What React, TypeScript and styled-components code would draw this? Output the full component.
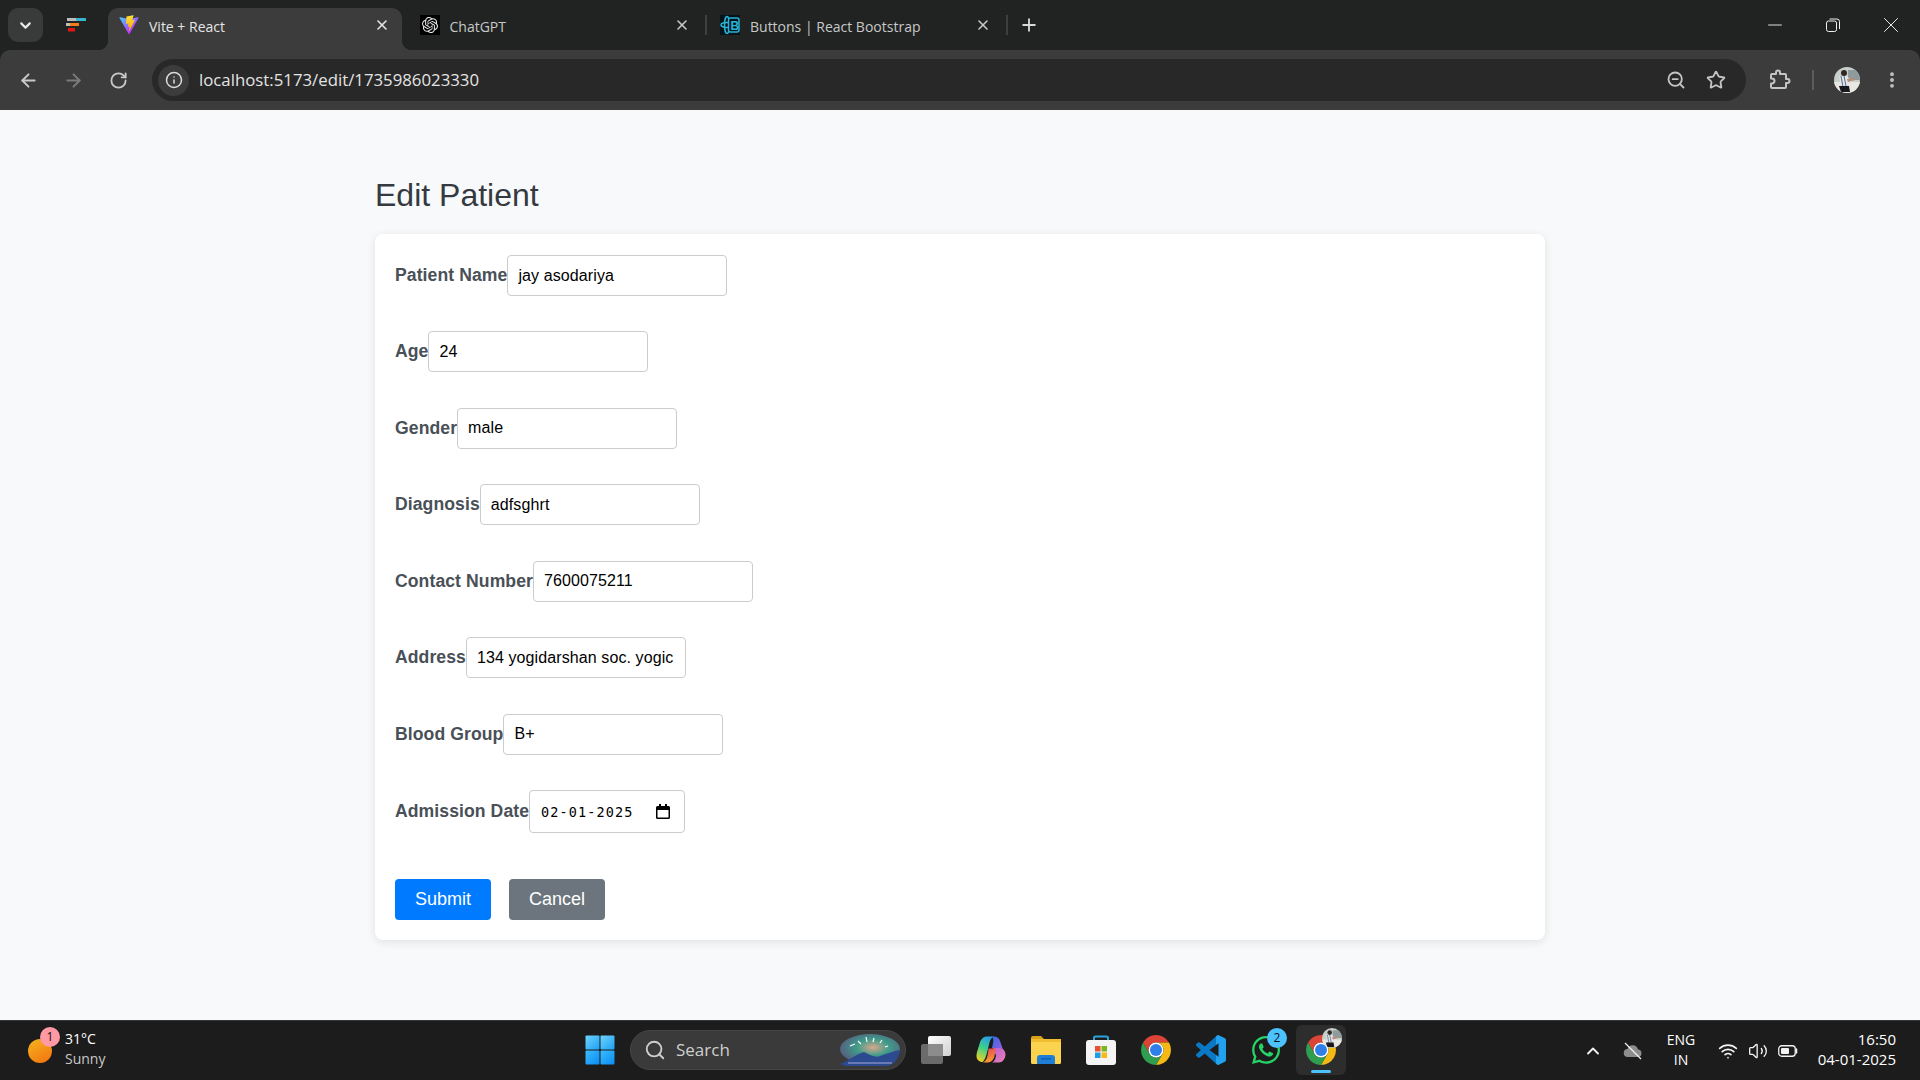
import React from 'react';
import styled, { createGlobalStyle } from 'styled-components';
import {
  ArrowLeft,
  ArrowRight,
  ChevronDown,
  ChevronUp,
  EllipsisVertical,
  Info,
  Minus,
  Plus,
  RotateCw,
  Search,
  Star,
  Volume2,
  Wifi,
  X,
  ZoomOut,
} from 'lucide-react';
import { FaWhatsapp } from 'react-icons/fa';
import { SiOpenai } from 'react-icons/si';

const GlobalStyle = createGlobalStyle`
  html, body {
    margin: 0;
    padding: 0;
    height: 100%;
    overflow: hidden;
  }
  body {
    font-family: "Liberation Sans", Arial, sans-serif;
    background: #202322;
  }
  * {
    box-sizing: border-box;
  }
`;

const uiFont = `"Open Sans", "Noto Sans", sans-serif`;

const Screen = styled.div`
  width: 1920px;
  height: 1080px;
  display: flex;
  flex-direction: column;
  background: #202322;
`;

/* ---------- tab strip ---------- */

const TabStrip = styled.div`
  height: 50px;
  flex: none;
  display: flex;
  padding-left: 8px;
  font-family: ${uiFont};
`;

const TabMenuButton = styled.div`
  width: 35px;
  height: 34px;
  margin-top: 8px;
  border-radius: 10px;
  background: #393b3b;
  color: #e8e8e8;
  display: flex;
  align-items: center;
  justify-content: center;
`;

const TabSearchCell = styled.div`
  width: 65px;
  display: flex;
  align-items: center;
  justify-content: center;
`;

const Tab = styled.div<{ $active?: boolean; $sep?: boolean }>`
  position: relative;
  isolation: isolate;
  width: 300.5px;
  height: 42px;
  margin-top: 8px;
  padding: 0 19px 8px 11px;
  display: flex;
  align-items: center;
  font-size: 14px;
  color: ${(p) => (p.$active ? '#e6e6e6' : '#c8c8c8')};

  &::after {
    content: '';
    display: ${(p) => (p.$sep ? 'block' : 'none')};
    position: absolute;
    right: 2px;
    top: 7px;
    width: 2px;
    height: 20px;
    background: #3d3f3f;
  }
`;

const ActiveTabShape = styled.span`
  position: absolute;
  z-index: -1;
  left: 0;
  top: 0;
  bottom: 0;
  width: 294px;
  background: #3c3c3c;
  border-radius: 10px 10px 0 0;

  &::before,
  &::after {
    content: '';
    position: absolute;
    bottom: 0;
    width: 10px;
    height: 10px;
  }
  &::before {
    left: -10px;
    background: radial-gradient(circle at 0 0, transparent 10px, #3c3c3c 10.5px);
  }
  &::after {
    right: -10px;
    background: radial-gradient(circle at 100% 0, transparent 10px, #3c3c3c 10.5px);
  }
`;

const Favicon = styled.span`
  width: 20px;
  height: 20px;
  flex: none;
  display: flex;
  align-items: center;
  justify-content: center;
`;

const DarkFavicon = styled(Favicon)`
  background: #000;
  color: #e8e8e8;
`;

const TabTitle = styled.span`
  margin: 2px 0 0 10px;
  flex: 1;
  white-space: nowrap;
`;

const NewTabCell = styled.div`
  width: 38px;
  display: flex;
  align-items: center;
  justify-content: center;
  color: #d8d8d8;
`;

const WindowControls = styled.div`
  margin-left: auto;
  display: flex;
`;

const WindowButton = styled.div`
  width: 58px;
  display: flex;
  align-items: center;
  justify-content: center;
  color: #f0f0f0;
`;

/* ---------- toolbar ---------- */

const Toolbar = styled.div`
  height: 60px;
  flex: none;
  display: flex;
  align-items: center;
  padding-left: 6px;
  background: #3c3c3c;
  border-radius: 10px 10px 0 0;
  font-family: ${uiFont};
`;

const NavButton = styled.div<{ $dim?: boolean }>`
  width: 45px;
  height: 40px;
  flex: none;
  display: flex;
  align-items: center;
  justify-content: center;
  color: ${(p) => (p.$dim ? '#7b7b7b' : '#c9c9c9')};
`;

const AddressBar = styled.div`
  width: 1594px;
  height: 42px;
  margin-left: 11px;
  padding: 0 10px 0 6px;
  flex: none;
  display: flex;
  align-items: center;
  background: #282828;
  border-radius: 21px;
`;

const SiteInfo = styled.div`
  width: 31px;
  height: 31px;
  border-radius: 50%;
  background: #3c3c3c;
  color: #dcdcdc;
  display: flex;
  align-items: center;
  justify-content: center;
`;

const UrlText = styled.span`
  margin: 0 auto 2px 10px;
  font-size: 16.8px;
  color: #e4e4e4;
`;

const BarIcon = styled.div`
  width: 40px;
  height: 40px;
  flex: none;
  display: flex;
  align-items: center;
  justify-content: center;
  color: #c4c4c4;
`;

const ExtensionCell = styled(BarIcon)`
  margin-left: 13px;
`;

const ToolbarDivider = styled.div`
  width: 2px;
  height: 20px;
  margin: 0 20px 0 13px;
  background: #5c5c5c;
`;

const Avatar = styled.div`
  width: 26px;
  height: 26px;
  flex: none;
  border-radius: 50%;
  overflow: hidden;
`;

const MenuCell = styled(BarIcon)`
  margin-left: 12px;
`;

/* ---------- page ---------- */

const Page = styled.main`
  flex: 1;
  background: #f8f9fa;
  padding-top: 65px;
`;

const Container = styled.div`
  width: 1170px;
  margin: 0 auto;
`;

const Heading = styled.h2`
  margin: 0 0 20px;
  height: 39px;
  font-size: 32px;
  line-height: 40px;
  font-weight: 400;
  color: #343a40;
`;

const Card = styled.form`
  background: #fff;
  border-radius: 8px;
  padding: 21px 20px 20px;
  box-shadow: 0 2px 10px rgba(0, 0, 0, 0.1);
  display: flex;
  flex-direction: column;
`;

const FormRow = styled.div`
  display: flex;
  align-items: center;
  margin-bottom: 35.45px;
`;

const FieldLabel = styled.label`
  font-size: 17.6px;
  font-weight: 700;
  letter-spacing: 0.08px;
  color: #495057;
  white-space: nowrap;
`;

const TextInput = styled.input`
  width: 220px;
  height: 41px;
  padding: 10px;
  border: 1px solid #ccc;
  border-radius: 4px;
  background: #fff;
  font-family: "Liberation Sans", Arial, sans-serif;
  font-size: 16px;
  letter-spacing: 0.1px;
  color: #000;
  outline: none;
`;

const DateField = styled.div`
  width: 156px;
  height: 43px;
  padding: 0 14px 0 11px;
  border: 1px solid #ccc;
  border-radius: 4px;
  display: flex;
  align-items: center;
  justify-content: space-between;
  font-family: "DejaVu Sans Mono", "Liberation Mono", monospace;
  font-size: 13.5px;
  letter-spacing: 1.1px;
  color: #000;
`;

const ButtonRow = styled.div`
  display: flex;
  gap: 18px;
  margin-top: 10.4px;
`;

const ActionButton = styled.button<{ $tone: string }>`
  height: 41px;
  padding: 0 20px;
  border: none;
  border-radius: 4px;
  background: ${(p) => p.$tone};
  color: #fff;
  font-family: "Liberation Sans", Arial, sans-serif;
  font-size: 18px;
`;

/* ---------- taskbar ---------- */

const Taskbar = styled.footer`
  height: 60px;
  flex: none;
  display: flex;
  align-items: center;
  padding-right: 24px;
  background: #1c1c1c;
  border-top: 1px solid #363636;
  font-family: ${uiFont};
  color: #fff;
`;

const Weather = styled.div`
  width: 575px;
  padding-left: 28px;
  display: flex;
  align-items: center;
`;

const WeatherIcon = styled.div`
  position: relative;
  width: 24px;
  height: 24px;
  border-radius: 50%;
  background: linear-gradient(150deg, #f3b61f, #f5700f);
`;

const NumberBadge = styled.span<{ $bg: string }>`
  position: absolute;
  top: -12px;
  right: -8px;
  width: 20px;
  height: 20px;
  border-radius: 50%;
  background: ${(p) => p.$bg};
  color: #111;
  font-size: 12px;
  line-height: 20px;
  text-align: center;
`;

const CellNumberBadge = styled(NumberBadge)`
  top: 3px;
  right: 4px;
`;

const WeatherText = styled.div`
  margin: 0 0 3px 13px;
  font-size: 14px;
  line-height: 20px;
`;

const DimLine = styled.div`
  color: #c8c8c8;
`;

const TaskGroup = styled.div`
  display: flex;
  align-items: center;
  gap: 5px;
  margin-bottom: 1px;
`;

const TaskCell = styled.div<{ $active?: boolean }>`
  position: relative;
  width: 50px;
  height: 50px;
  border-radius: 6px;
  background: ${(p) => (p.$active ? '#2d2d2d' : 'transparent')};
  display: flex;
  align-items: center;
  justify-content: center;
`;

const ActiveBar = styled.span`
  position: absolute;
  left: 15px;
  bottom: 2px;
  width: 20px;
  height: 3px;
  border-radius: 2px;
  background: #4cc2ff;
`;

const CellBadge = styled.span`
  position: absolute;
  top: 3px;
  right: 4px;
  width: 20px;
  height: 20px;
  border-radius: 50%;
  overflow: hidden;
`;

const SearchPill = styled.div`
  width: 276px;
  height: 40px;
  padding: 0 3px 0 13px;
  border-radius: 20px;
  background: #3a3a3a;
  border: 1px solid #464646;
  display: flex;
  align-items: center;
  color: #cfcfcf;
  font-size: 17px;
`;

const SearchLabel = styled.span`
  margin: 0 auto 1px 10px;
`;

const Tray = styled.div`
  margin-left: auto;
  display: flex;
  align-items: center;
`;

const TrayCell = styled.div<{ $w: number }>`
  width: ${(p) => p.$w}px;
  display: flex;
  align-items: center;
  justify-content: center;
  color: #f2f2f2;
`;

const Language = styled.div`
  width: 56px;
  margin: 0 4px 1px 0;
  font-size: 14px;
  line-height: 20px;
  text-align: center;
`;

const Clock = styled.div`
  width: 93px;
  margin-bottom: 3px;
  font-size: 15px;
  line-height: 20px;
  text-align: right;
  white-space: nowrap;
`;

/* ---------- drawings ---------- */

const TabSearchLogo = () => (
  <svg width="20" height="14" viewBox="0 0 20 14">
    <rect x="1" y="0" width="12" height="3" fill="#bdbdbd" />
    <rect x="10" y="0" width="10" height="3" fill="#38b6c9" />
    <rect x="0" y="5" width="5" height="3" fill="#bdbdbd" />
    <rect x="4" y="5" width="9" height="3" fill="#ef7d1a" />
    <rect x="2" y="10" width="7" height="3.5" fill="#e01515" />
  </svg>
);

const ViteLogo = () => (
  <svg width="20" height="20" viewBox="0 0 410 404">
    <defs>
      <linearGradient id="viteA" x1="6" y1="33" x2="235" y2="344" gradientUnits="userSpaceOnUse">
        <stop offset="0" stopColor="#41D1FF" />
        <stop offset="1" stopColor="#BD34FE" />
      </linearGradient>
      <linearGradient id="viteB" x1="194" y1="8" x2="236" y2="293" gradientUnits="userSpaceOnUse">
        <stop offset="0" stopColor="#FFEA83" />
        <stop offset="0.08" stopColor="#FFDD35" />
        <stop offset="1" stopColor="#FFA800" />
      </linearGradient>
    </defs>
    <path
      fill="url(#viteA)"
      d="M399.641 59.525 215.643 388.545c-3.799 6.793-13.559 6.833-17.415.073L10.582 59.556C6.38 52.19 12.68 43.266 21.028 44.76l184.195 32.923c1.175.21 2.378.208 3.553-.006l180.343-32.87c8.32-1.517 14.649 7.337 10.522 14.719Z"
    />
    <path
      fill="url(#viteB)"
      d="M292.965 1.574 156.801 28.255a5 5 0 0 0-4.03 4.611l-8.376 141.464c-.197 3.332 2.863 5.918 6.115 5.168l37.91-8.749c3.547-.818 6.752 2.306 6.023 5.873l-11.263 55.153c-.758 3.712 2.727 6.886 6.352 5.785l23.415-7.114c3.63-1.102 7.118 2.081 6.35 5.796l-17.899 86.633c-1.12 5.419 6.088 8.374 9.094 3.728l2.008-3.103 110.954-221.428c1.858-3.707-1.346-7.935-5.418-7.15l-39.022 7.532c-3.667.707-6.787-2.708-5.752-6.296l25.469-88.291c1.036-3.594-2.095-7.012-5.766-6.293Z"
    />
  </svg>
);

const BootstrapLogo = () => (
  <svg width="20" height="20" viewBox="0 0 20 20" fill="none" stroke="#2ab3d6" strokeWidth="1.5">
    <rect width="20" height="20" fill="#03141a" stroke="none" />
    <ellipse cx="7" cy="10" rx="6" ry="2.5" />
    <ellipse cx="7" cy="10" rx="2.5" ry="8.5" />
    <rect x="8.5" y="3" width="10.5" height="14" rx="2" fill="#03141a" />
    <text x="10.5" y="15" fontSize="12" fontWeight="700" fill="#2ab3d6" stroke="none" fontFamily="Liberation Sans">
      B
    </text>
  </svg>
);

const RestoreIcon = () => (
  <svg width="14" height="14" viewBox="0 0 14 14" fill="none" stroke="currentColor" strokeWidth="1">
    <rect x="0.5" y="3" width="10" height="10.5" rx="2" />
    <path d="M3.5 1h7.5a2.5 2.5 0 0 1 2.5 2.5V11" />
  </svg>
);

const ExtensionIcon = () => (
  <svg width="24" height="24" viewBox="0 0 24 24" fill="none" stroke="currentColor" strokeWidth="2" strokeLinejoin="round">
    <path d="M9 4.5a2 2 0 0 1 4 0V6h5a1 1 0 0 1 1 1v4h1.500a2 2 0 0 1 0 4H19v4a1 1 0 0 1-1 1H5a1 1 0 0 1-1-1v-3.500h1a2.500 2.500 0 0 0 0-5H4V7a1 1 0 0 1 1-1h4z" />
  </svg>
);

const AvatarPhoto = () => (
  <svg width="100%" height="100%" viewBox="0 0 26 26">
    <rect width="26" height="26" fill="#c6cfc9" />
    <rect x="14" y="3" width="12" height="10" fill="#8e9a9c" />
    <rect x="0" y="15" width="26" height="11" fill="#e9e7e1" />
    <circle cx="10" cy="6" r="3" fill="#2f2723" />
    <path d="M5 9h8l5 6-4 2-1 3H7z" fill="#dfe4ea" />
    <path d="M7 9l2 11M10 9l2 10" stroke="#5f6b80" strokeWidth="1" />
    <path d="M5 19h10l1 6H7z" fill="#17171d" />
    <path d="M13 12l7-1 1 2-7 2z" fill="#b98d73" />
  </svg>
);

const WindowsLogo = () => (
  <svg width="30" height="30" viewBox="0 0 30 30">
    <defs>
      <linearGradient id="winA" x1="0" y1="0" x2="1" y2="1">
        <stop offset="0" stopColor="#6fd3ff" />
        <stop offset="1" stopColor="#1da1f2" />
      </linearGradient>
      <linearGradient id="winB" x1="0" y1="0" x2="1" y2="1">
        <stop offset="0" stopColor="#3cbcff" />
        <stop offset="1" stopColor="#0a8cf0" />
      </linearGradient>
    </defs>
    <rect x="0.5" y="0.5" width="14" height="14" rx="1" fill="url(#winA)" />
    <rect x="15.5" y="0.5" width="14" height="14" rx="1" fill="url(#winA)" />
    <rect x="0.5" y="15.5" width="14" height="14" rx="1" fill="url(#winB)" />
    <rect x="15.5" y="15.5" width="14" height="14" rx="1" fill="url(#winB)" />
  </svg>
);

const SearchArt = () => (
  <svg width="64" height="32" viewBox="0 0 64 32">
    <defs>
      <radialGradient id="artSky" cx="0.55" cy="0.45" r="0.6">
        <stop offset="0" stopColor="#d9a88c" />
        <stop offset="0.45" stopColor="#3f9c8a" />
        <stop offset="1" stopColor="#57587e" />
      </radialGradient>
    </defs>
    <ellipse cx="32" cy="15" rx="30" ry="15" fill="url(#artSky)" />
    <path d="M2 30c8-3 16-10 24-12 6 3 12 6 16 4 6-2 14-5 20-6-1 8-5 14-12 16H8z" fill="#2c4a8f" />
    <path d="M10 29h44" stroke="#7f88c0" strokeWidth="1.500" />
    <g stroke="#fff" strokeWidth="1.2">
      <path d="M12 12l5-2M20 7l3 3M28 3l1 5M36 4l-1 4M44 6l-2 3M50 12l-3 1" />
    </g>
  </svg>
);

const TaskViewIcon = () => (
  <svg width="30" height="28" viewBox="0 0 30 28">
    <defs>
      <linearGradient id="tvA" x1="0" y1="0" x2="1" y2="1">
        <stop offset="0" stopColor="#ffffff" />
        <stop offset="1" stopColor="#cfcfcf" />
      </linearGradient>
    </defs>
    <rect x="0" y="8" width="22" height="20" rx="2" fill="#6b6b6b" />
    <rect x="7" y="0" width="23" height="20" rx="2" fill="url(#tvA)" />
    <rect x="7" y="8" width="15" height="12" fill="#8c8c8c" />
  </svg>
);

const CopilotIcon = () => (
  <svg width="30" height="30" viewBox="0 0 30 30">
    <defs>
      <linearGradient id="copA" x1="0.6" y1="0" x2="0.2" y2="1">
        <stop offset="0" stopColor="#2a9fe8" />
        <stop offset="0.45" stopColor="#3ccf8a" />
        <stop offset="1" stopColor="#f7d21e" />
      </linearGradient>
      <linearGradient id="copB" x1="0" y1="0" x2="1" y2="0.6">
        <stop offset="0" stopColor="#2f6fe0" />
        <stop offset="1" stopColor="#8a5ce0" />
      </linearGradient>
      <linearGradient id="copC" x1="0" y1="0" x2="1" y2="1">
        <stop offset="0" stopColor="#b45fdc" />
        <stop offset="1" stopColor="#f080b0" />
      </linearGradient>
      <linearGradient id="copD" x1="0" y1="0" x2="0.3" y2="1">
        <stop offset="0" stopColor="#e8405a" />
        <stop offset="1" stopColor="#f59a2e" />
      </linearGradient>
    </defs>
    <path d="M11 1.500h7c-2.500 1-3.800 3-4.500 6l-1.700 7c-1 4-2 10-5.300 12.500-3.400 0-6-2.500-6-6 0-2 .5-4 1.300-6.500l2-6.500C5 4 7.500 1.500 11 1.500z" fill="url(#copA)" />
    <path d="M17 1.500h1c3 0 5 1.500 6 4.500l3 8.500c-1-1-2.500-1.500-4-1.500h-7l1-5c.8-3-.5-6-.5-6.500z" fill="url(#copB)" />
    <path d="M17 13h7c3 0 5.500 3 5.500 6.500S27 27.500 23 27.500h-7c2.500-1 3.500-4 4-7z" fill="url(#copC)" />
    <path d="M12.500 13.500H20l-1.500 7.500c-.7 3.500-3 6.500-7 6.500H6.500c3-.5 4.500-4 5.200-8z" fill="url(#copD)" />
  </svg>
);

const FolderIcon = () => (
  <svg width="30" height="28" viewBox="0 0 30 28">
    <path d="M0 2a2 2 0 0 1 2-2h8l4 4h-14z" fill="#d9a21b" />
    <rect x="0" y="3" width="30" height="25" rx="1.500" fill="#fcd34f" />
    <rect x="0" y="3" width="30" height="3" fill="#f0bd30" />
    <path d="M6 28v-6a3 3 0 0 1 3-3h12a3 3 0 0 1 3 3v6z" fill="#1f7fd6" />
    <rect x="10" y="22" width="10" height="1.500" fill="#0f5fae" />
  </svg>
);

const StoreIcon = () => (
  <svg width="30" height="30" viewBox="0 0 30 30">
    <path d="M8 8V3a1.500 1.500 0 0 1 1.500-1.500h11A1.500 1.500 0 0 1 22 3v5" fill="none" stroke="#27a4dd" strokeWidth="2" />
    <rect x="0" y="5" width="30" height="25" rx="3" fill="#f4f4f4" />
    <rect x="9" y="11" width="5.500" height="5.500" fill="#e9502c" />
    <rect x="15.500" y="11" width="5.500" height="5.500" fill="#7bb61f" />
    <rect x="9" y="17.500" width="5.500" height="5.500" fill="#1c9de6" />
    <rect x="15.500" y="17.500" width="5.500" height="5.500" fill="#fbb812" />
  </svg>
);

const ChromeLogo = () => (
  <svg width="30" height="30" viewBox="2 2 44 44">
    <path d="M4.95 13A22 22 0 0 1 43.05 13H24A11 11 0 0 0 14.47 29.5Z" fill="#db4437" />
    <path d="M43.05 13A22 22 0 0 1 24 46L33.53 29.5A11 11 0 0 0 24 13Z" fill="#f4b915" />
    <path d="M24 46A22 22 0 0 1 4.95 13L14.47 29.5A11 11 0 0 0 33.53 29.5Z" fill="#2f9e4f" />
    <circle cx="24" cy="24" r="11" fill="#fff" />
    <circle cx="24" cy="24" r="8.800" fill="#2f7fe8" />
  </svg>
);

const VsCodeIcon = () => (
  <svg width="30" height="30" viewBox="0 0 24 24">
    <defs>
      <linearGradient id="vsA" x1="0" y1="0" x2="1" y2="0">
        <stop offset="0.68" stopColor="#0a78c4" />
        <stop offset="0.68" stopColor="#22a2ee" />
      </linearGradient>
    </defs>
    <path
      fill="url(#vsA)"
      d="M23.15 2.587L18.21.21a1.494 1.494 0 0 0-1.705.29l-9.46 8.63-4.12-3.128a.999.999 0 0 0-1.276.057L.327 7.261A1 1 0 0 0 .326 8.74L3.899 12 .326 15.26a1 1 0 0 0 .001 1.479L1.65 17.94a.999.999 0 0 0 1.276.057l4.12-3.128 9.46 8.63a1.492 1.492 0 0 0 1.704.29l4.942-2.377A1.5 1.5 0 0 0 24 20.06V3.939a1.5 1.5 0 0 0-.85-1.352zm-5.146 14.861L10.826 12l7.178-5.448v10.896z"
    />
  </svg>
);

const CloudOffIcon = () => (
  <svg width="20" height="18" viewBox="0 0 20 18">
    <path d="M5 15a4 4 0 0 1-.5-8A5.500 5.500 0 0 1 15 7.500 3.800 3.800 0 0 1 15.500 15z" fill="#8d8d8d" />
    <path d="M2 1l16 16" stroke="#f0f0f0" strokeWidth="1.200" />
  </svg>
);

const BatteryIcon = () => (
  <svg width="20" height="14" viewBox="0 0 20 14" fill="none">
    <rect x="0.750" y="1.750" width="16.500" height="10.500" rx="3" stroke="#f2f2f2" strokeWidth="1.300" />
    <rect x="3" y="4" width="8" height="6" rx="1" fill="#f2f2f2" />
    <path d="M18.500 5v4" stroke="#f2f2f2" strokeWidth="1.500" strokeLinecap="round" />
  </svg>
);

const CalendarIcon = () => (
  <svg width="14" height="15" viewBox="0 0 14 15">
    <path d="M3 0h2v2h4V0h2v2h1.500A1.500 1.500 0 0 1 14 3.500v10a1.500 1.500 0 0 1-1.500 1.500h-11A1.500 1.500 0 0 1 0 13.500v-10A1.500 1.500 0 0 1 1.500 2H3zM1.500 6v7.500h11V6z" fill="#000" />
  </svg>
);

const fields = [
  { label: 'Patient Name', value: 'jay asodariya' },
  { label: 'Age', value: '24' },
  { label: 'Gender', value: 'male' },
  { label: 'Diagnosis', value: 'adfsghrt' },
  { label: 'Contact Number', value: '7600075211' },
  { label: 'Address', value: '134 yogidarshan soc. yogic' },
  { label: 'Blood Group', value: 'B+' },
];

const App = () => {
  return (
    <Screen>
      <GlobalStyle />

      <TabStrip>
        <TabMenuButton>
          <ChevronDown size={17} strokeWidth={3} />
        </TabMenuButton>
        <TabSearchCell>
          <TabSearchLogo />
        </TabSearchCell>
        <Tab $active>
          <ActiveTabShape />
          <Favicon>
            <ViteLogo />
          </Favicon>
          <TabTitle>Vite + React</TabTitle>
          <X size={16} strokeWidth={2.4} />
        </Tab>
        <Tab $sep>
          <DarkFavicon>
            <SiOpenai size={16} />
          </DarkFavicon>
          <TabTitle>ChatGPT</TabTitle>
          <X size={16} strokeWidth={2.4} />
        </Tab>
        <Tab $sep>
          <Favicon>
            <BootstrapLogo />
          </Favicon>
          <TabTitle>Buttons | React Bootstrap</TabTitle>
          <X size={16} strokeWidth={2.4} />
        </Tab>
        <NewTabCell>
          <Plus size={20} strokeWidth={2.2} />
        </NewTabCell>
        <WindowControls>
          <WindowButton>
            <Minus size={22} strokeWidth={1} />
          </WindowButton>
          <WindowButton>
            <RestoreIcon />
          </WindowButton>
          <WindowButton>
            <X size={26} strokeWidth={0.9} />
          </WindowButton>
        </WindowControls>
      </TabStrip>

      <Toolbar>
        <NavButton>
          <ArrowLeft size={21} strokeWidth={2.2} />
        </NavButton>
        <NavButton $dim>
          <ArrowRight size={21} strokeWidth={2.2} />
        </NavButton>
        <NavButton>
          <RotateCw size={19} strokeWidth={2.3} />
        </NavButton>
        <AddressBar>
          <SiteInfo>
            <Info size={18} strokeWidth={2} />
          </SiteInfo>
          <UrlText>localhost:5173/edit/1735986023330</UrlText>
          <BarIcon>
            <ZoomOut size={20} strokeWidth={2.2} />
          </BarIcon>
          <BarIcon>
            <Star size={20} strokeWidth={2.2} />
          </BarIcon>
        </AddressBar>
        <ExtensionCell>
          <ExtensionIcon />
        </ExtensionCell>
        <ToolbarDivider />
        <Avatar>
          <AvatarPhoto />
        </Avatar>
        <MenuCell>
          <EllipsisVertical size={20} strokeWidth={2.6} />
        </MenuCell>
      </Toolbar>

      <Page>
        <Container>
          <Heading>Edit Patient</Heading>
          <Card>
            {fields.map((f) => (
              <FormRow key={f.label}>
                <FieldLabel>{f.label}</FieldLabel>
                <TextInput defaultValue={f.value} />
              </FormRow>
            ))}
            <FormRow>
              <FieldLabel>Admission Date</FieldLabel>
              <DateField>
                <span>02-01-2025</span>
                <CalendarIcon />
              </DateField>
            </FormRow>
            <ButtonRow>
              <ActionButton type="button" $tone="#007bff">
                Submit
              </ActionButton>
              <ActionButton type="button" $tone="#6c757d">
                Cancel
              </ActionButton>
            </ButtonRow>
          </Card>
        </Container>
      </Page>

      <Taskbar>
        <Weather>
          <WeatherIcon>
            <NumberBadge $bg="#ff99a4">1</NumberBadge>
          </WeatherIcon>
          <WeatherText>
            <div>31°C</div>
            <DimLine>Sunny</DimLine>
          </WeatherText>
        </Weather>
        <TaskGroup>
          <TaskCell>
            <WindowsLogo />
          </TaskCell>
          <SearchPill>
            <Search size={22} strokeWidth={2} />
            <SearchLabel>Search</SearchLabel>
            <SearchArt />
          </SearchPill>
          <TaskCell>
            <TaskViewIcon />
          </TaskCell>
          <TaskCell>
            <CopilotIcon />
          </TaskCell>
          <TaskCell>
            <FolderIcon />
          </TaskCell>
          <TaskCell>
            <StoreIcon />
          </TaskCell>
          <TaskCell>
            <ChromeLogo />
          </TaskCell>
          <TaskCell>
            <VsCodeIcon />
          </TaskCell>
          <TaskCell>
            <FaWhatsapp size={32} color="#25d366" />
            <CellNumberBadge $bg="#4cc2ff">2</CellNumberBadge>
          </TaskCell>
          <TaskCell $active>
            <ChromeLogo />
            <CellBadge>
              <AvatarPhoto />
            </CellBadge>
            <ActiveBar />
          </TaskCell>
        </TaskGroup>
        <Tray>
          <TrayCell $w={40}>
            <ChevronUp size={20} strokeWidth={2.2} />
          </TrayCell>
          <TrayCell $w={40}>
            <CloudOffIcon />
          </TrayCell>
          <Language>
            <div>ENG</div>
            <div>IN</div>
          </Language>
          <TrayCell $w={30}>
            <Wifi size={20} strokeWidth={2} />
          </TrayCell>
          <TrayCell $w={30}>
            <Volume2 size={20} strokeWidth={1.6} />
          </TrayCell>
          <TrayCell $w={30}>
            <BatteryIcon />
          </TrayCell>
          <Clock>
            <div>16:50</div>
            <div>04-01-2025</div>
          </Clock>
        </Tray>
      </Taskbar>
    </Screen>
  );
};

export default App;
